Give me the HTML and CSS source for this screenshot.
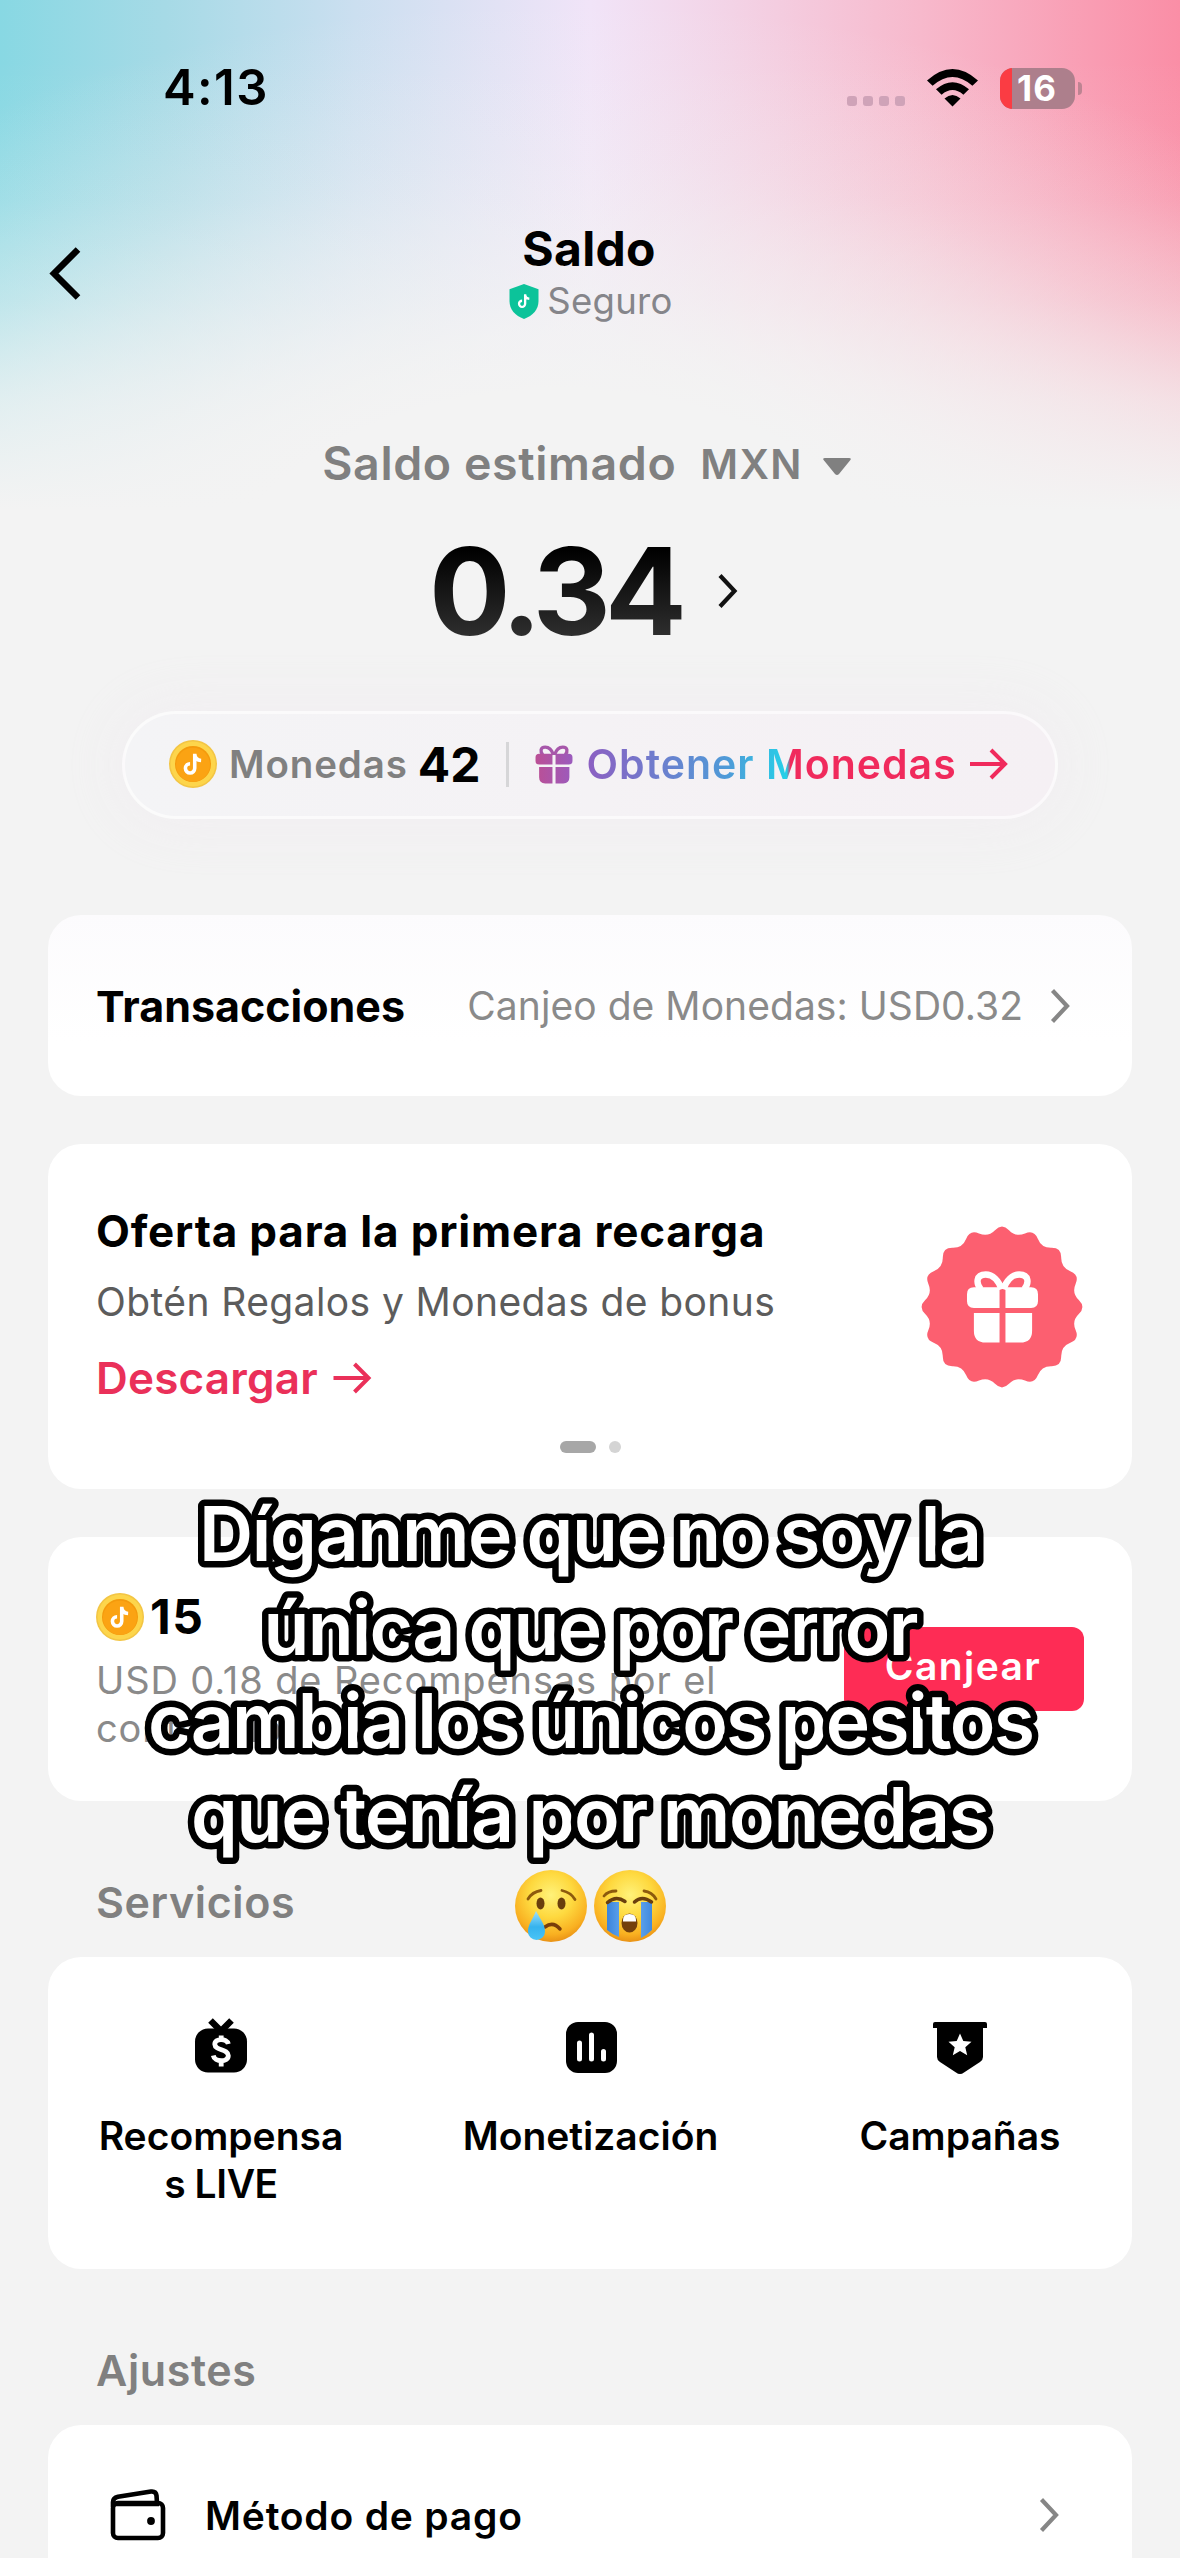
FILE: index.html
```html
<!DOCTYPE html>
<html lang="es">
<head>
<meta charset="utf-8">
<title>Saldo</title>
<link rel="stylesheet" href="styles.css">
</head>
<body>
<svg width="0" height="0" class="defs" aria-hidden="true">
  <defs>
    <linearGradient id="giftFill" x1="0" y1="0" x2="1" y2="0"><stop offset="0" stop-color="#bb4f95"/><stop offset="1" stop-color="#9b5bbd"/></linearGradient>
    <radialGradient id="faceFill" cx=".5" cy=".35" r=".68"><stop offset="0" stop-color="#fff27a"/><stop offset=".45" stop-color="#fed93f"/><stop offset=".8" stop-color="#f9b021"/><stop offset="1" stop-color="#e58a12"/></radialGradient>
    <linearGradient id="tearFill" x1="0" y1="0" x2="0" y2="1"><stop offset="0" stop-color="#9fe0fb"/><stop offset=".55" stop-color="#35b3ee"/><stop offset="1" stop-color="#49c4f6"/></linearGradient>
    <linearGradient id="streamFill" x1="0" y1="0" x2="1" y2="0"><stop offset="0" stop-color="#3a83dc"/><stop offset=".5" stop-color="#74b6f5"/><stop offset="1" stop-color="#4089de"/></linearGradient>
    <symbol id="note" viewBox="0 0 24 24">
      <path d="M13.6 2.5V16a4.3 4.3 0 1 1-4.3-4.3M13.6 3c.3 3.600 2.400 5.600 5.900 5.800" fill="none" stroke="#fff" stroke-width="3.300"/>
    </symbol>
    <symbol id="coin" viewBox="0 0 48 48">
      <circle cx="24" cy="24" r="24" fill="#f3c544"/>
      <circle cx="24" cy="24" r="22.500" fill="#fdd54b"/>
      <circle cx="24" cy="24" r="18" fill="#f49a0c"/>
      <circle cx="24" cy="24.800" r="17" fill="#fba313"/>
      <use href="#note" x="11" y="11" width="26" height="26"/>
    </symbol>
    <symbol id="gift" viewBox="0 0 74 74">
      <path d="M36 19C33 10 27 4 20 4C10 4 10 13 15 19M38 19C41 10 47 4 54 4C64 4 64 13 59 19" fill="none" stroke="currentColor" stroke-width="6.500"/>
      <path d="M8 17h26v21H8q-7 0-7-7v-7q0-7 7-7zM40 17h26q7 0 7 7v7q0 7-7 7H40zM8 43h26v30H20Q8 73 8 61zM40 43h27v18q0 12-12 12H40z" fill="currentColor"/>
    </symbol>
    <symbol id="chevron" viewBox="0 0 20 36"><path d="M2.500 2.500L17 18 2.500 33.500" fill="none" stroke="currentColor" stroke-width="4.200"/></symbol>
    <symbol id="arrow" viewBox="0 0 38 32"><path d="M0 16h35M21 2l14 14-14 14" fill="none" stroke="currentColor" stroke-width="4"/></symbol>
  </defs>
</svg>

<main class="screen">
  <div class="status">
    <span class="time">4:13</span>
    <div class="indicators">
      <span class="cell"><i></i><i></i><i></i><i></i></span>
      <svg class="wifi" width="51" height="38" viewBox="0 0 51 38">
        <path d="M0 11.500Q25.500-11.500 51 11.500l-5.600 5.300Q25.500-.8 5.600 16.800z"/>
        <path d="M9 20.300Q25.500 6 42 20.300l-5.600 5.400Q25.500 16.500 14.600 25.700z"/>
        <path d="M17.500 29.500Q25.500 22.500 33.500 29.500L25.500 37.500z"/>
      </svg>
      <span class="battery"><span class="level"></span><span class="percent">16</span></span>
      <span class="nub"></span>
    </div>
  </div>

  <header class="nav">
    <svg class="back" width="32" height="53" viewBox="0 0 32 53"><path d="M29 2.500L5 26.500l24 24" fill="none" stroke="#000" stroke-width="6.500"/></svg>
    <div class="heading">
      <h1>Saldo</h1>
      <div class="secure">
        <svg width="30" height="35" viewBox="0 0 30 35"><path d="M15 0l14.500 5.300V17c0 8.500-5.500 14.500-14.500 18C6 31.500.5 25.500.5 17V5.300z" fill="#0cc39a"/><use href="#note" x="6.500" y="8.500" width="17" height="17"/></svg>
        <span>Seguro</span>
      </div>
    </div>
  </header>

  <section class="balance">
    <div class="estimate"><span class="label">Saldo estimado</span><span class="currency">MXN</span><svg width="28" height="17" viewBox="0 0 28 17"><path d="M2 0h24q3 0 1 2.500L16 16q-2 2-4 0L1 2.500Q-1 0 2 0z" fill="#808080"/></svg></div>
    <div class="amount"><span>0.34</span><svg width="21" height="36"><use href="#chevron" width="21" height="36"/></svg></div>
    <div class="pill">
      <svg width="48" height="48"><use href="#coin"/></svg>
      <span class="coins-label">Monedas</span>
      <span class="coins-value">42</span>
      <span class="divider"></span>
      <svg class="gift" width="38" height="39" viewBox="0 0 74 76">
        <path d="M36 19C33 10 27 4 20 4C10 4 10 13 15 19M38 19C41 10 47 4 54 4C64 4 64 13 59 19" fill="none" stroke="#a757aa" stroke-width="6.500"/>
        <path d="M8 17h26v21H8q-7 0-7-7v-7q0-7 7-7zM40 17h26q7 0 7 7v7q0 7-7 7H40zM8 43h26v32H20Q8 75 8 63zM40 43h27v20q0 12-12 12H40z" fill="url(#giftFill)"/>
      </svg>
      <span class="get-coins">Obtener Monedas</span>
      <svg class="pink" width="38" height="32"><use href="#arrow"/></svg>
    </div>
  </section>

  <section class="card transactions">
    <h2>Transacciones</h2>
    <span class="detail">Canjeo de Monedas: USD0.32</span>
    <svg width="20" height="36"><use href="#chevron"/></svg>
  </section>

  <section class="card offer">
    <div class="offer-body">
      <div>
        <h2>Oferta para la primera recarga</h2>
        <p>Obtén Regalos y Monedas de bonus</p>
        <div class="download"><span>Descargar</span><svg width="39" height="32"><use href="#arrow"/></svg></div>
      </div>
      <svg class="badge" width="164" height="164" viewBox="-82 -82 164 164">
        <path fill="#fc5f70" d="M7-76.800Q13.900-69.600 23-73.600Q32.100-77.600 35.800-68.300Q39.400-59 49.400-59.200Q59.400-59.400 59.200-49.400Q59-39.400 68.300-35.800Q77.600-32.100 73.600-23Q69.600-13.900 76.800-7Q84 0 76.800 7Q69.600 13.900 73.600 23Q77.600 32.100 68.300 35.800Q59 39.400 59.200 49.400Q59.400 59.400 49.400 59.200Q39.400 59 35.800 68.300Q32.100 77.600 23 73.600Q13.900 69.600 7 76.800Q0 84-7 76.800Q-13.900 69.600-23 73.600Q-32.100 77.600-35.800 68.300Q-39.400 59-49.400 59.200Q-59.400 59.400-59.200 49.400Q-59 39.400-68.300 35.800Q-77.600 32.100-73.600 23Q-69.600 13.900-76.800 7Q-84 0-76.800-7Q-69.600-13.900-73.600-23Q-77.600-32.100-68.300-35.800Q-59-39.400-59.200-49.400Q-59.400-59.400-49.400-59.200Q-39.400-59-35.800-68.300Q-32.100-77.600-23-73.600Q-13.900-69.600-7-76.800Q0-84 7-76.800z"/>
        <use href="#gift" x="-36" y="-37" width="73" height="74" color="#fff"/>
      </svg>
    </div>
    <div class="dots"><i class="on"></i><i></i></div>
  </section>

  <section class="card rewards">
    <div>
      <div class="reward-value"><svg width="48" height="48"><use href="#coin"/></svg><strong>15</strong></div>
      <p>USD 0.18 de Recompensas por el<br>contenido</p>
    </div>
    <button>Canjear</button>
  </section>

  <h3>Servicios</h3>
  <section class="card services">
    <div class="service">
      <svg width="54" height="56" viewBox="0 0 54 56"><path d="M16.500 2.500L27 13 37.500 2.500" fill="none" stroke="#000" stroke-width="6.500"/><rect x="1" y="10.500" width="52" height="44" rx="13"/><path d="M34.300 26C33 20 20.500 20 20.800 26.300C21.200 33 34 30.500 34.300 37.500C34.500 44.500 20.500 44.500 19.300 37.500M27.200 17.500V23M27.200 41.500v7" fill="none" stroke="#fff" stroke-width="4.800"/></svg>
      <span>Recompensa<br><span class="tight">s LIVE</span></span>
    </div>
    <div class="service">
      <svg width="54" height="56" viewBox="0 0 54 56"><rect x="2" y="4" width="51" height="51" rx="12"/><path d="M15.500 25v16M27.500 17v24M39.500 33.500V41" stroke="#fff" stroke-width="5" stroke-linecap="round"/></svg>
      <span>Monetización</span>
    </div>
    <div class="service">
      <svg width="54" height="56" viewBox="0 0 54 56"><path d="M2 4h50q2 0 2 2v4h-4v29q0 3-3 5L31 54.500q-4 3-8 0L7 44q-3-2-3-5V10H0V6q0-2 2-2z"/><path d="M27 15.500l3.300 7.600 8.200.7-6.200 5.400 1.900 8.100-7.200-4.300-7.200 4.300 1.900-8.100-6.200-5.400 8.200-.7z" fill="#fff"/></svg>
      <span>Campañas</span>
    </div>
  </section>

  <h3>Ajustes</h3>
  <section class="card settings">
    <svg width="56" height="52" viewBox="0 0 56 52"><g fill="none" stroke="#000" stroke-width="4.600" stroke-linejoin="round"><rect x="3" y="14" width="50" height="35" rx="5"/><path d="M3 18V13q0-4 5-5.200L41 2.500q5-.5 5.500 4L47 14M3 15h46"/></g><circle cx="41" cy="32" r="3.900"/></svg>
    <span class="method">Método de pago</span>
    <svg width="20" height="36" class="next"><use href="#chevron"/></svg>
  </section>

  <div class="caption">
    <svg class="lines" width="1180" height="390" viewBox="0 0 1180 390">
      <text x="590.500" y="74" textLength="783">Díganme que no soy la</text>
      <text x="591" y="167.600" textLength="655">única que por error</text>
      <text x="591.500" y="261.200" textLength="887">cambia los únicos pesitos</text>
      <text x="590.500" y="354.800" textLength="799">que tenía por monedas</text>
    </svg>
    <div class="emojis">
      <svg width="72" height="72" viewBox="0 0 72 72">
        <circle cx="36" cy="36" r="36" fill="url(#faceFill)"/>
        <path d="M13 29Q17 22 26 20.500M47 20.500Q56 22.500 60 29.500" fill="none" stroke="#8d5a0d" stroke-width="2.800" stroke-linecap="round"/>
        <ellipse cx="25.500" cy="33.500" rx="4" ry="6" fill="#6a3f0d"/><ellipse cx="46.500" cy="33.500" rx="4" ry="6" fill="#6a3f0d"/>
        <path d="M30 57Q38 51 45 59" fill="none" stroke="#7a3e0a" stroke-width="3.500" stroke-linecap="round"/>
        <path d="M21 41C25 49 30 54 30 61.500A8.500 8.500 0 0 1 13 61.500C13 54 18 49 21 41z" fill="url(#tearFill)"/>
      </svg>
      <svg width="72" height="72" viewBox="0 0 72 72">
        <circle cx="36" cy="36" r="36" fill="url(#faceFill)"/>
        <path d="M10 26Q14 21 22 21M50 21Q58 22 62 29" fill="none" stroke="#8d5a0d" stroke-width="2.800" stroke-linecap="round"/>
        <path d="M13 32h12v35q-6-2-12-7zM47 32h11v28q-5 5-11 8z" fill="url(#streamFill)"/>
        <path d="M13.500 32.500Q22 25 31 31.500M40.500 32Q48 25 57.500 32" fill="none" stroke="#6a3f0d" stroke-width="3.500" stroke-linecap="round"/>
        <ellipse cx="35.500" cy="53" rx="8" ry="9.500" fill="#74400c"/><path d="M29 50q0-6 6.500-6t6.500 6v1.500H29z" fill="#fff"/>
      </svg>
    </div>
  </div>
</main>
</body>
</html>
```
FILE: styles.css
```css
* { box-sizing: border-box; }
body { margin: 0; background: #f3f3f3; }
.defs { position: absolute; }
svg { display: block; flex: none; }
h1, h2, h3, p { margin: 0; }

.screen {
  position: relative;
  width: 1180px;
  height: 2558px;
  overflow: hidden;
  font-family: "Inter", sans-serif;
  color: #000;
  background:
    linear-gradient(180deg, rgba(243,243,243,0) 60px, rgba(243,243,243,.12) 200px, rgba(243,243,243,.36) 300px, rgba(243,243,243,.72) 400px, #f3f3f3 510px),
    radial-gradient(ellipse 980px 590px at 560px 590px, #f3f3f3 34%, rgba(243,243,243,.6) 52%, rgba(243,243,243,.26) 74%, rgba(243,243,243,0) 100%),
    linear-gradient(90deg, #88d8e3 0%, #a6dae6 14%, #cbdff0 30%, #f1e4f8 50%, #f3d3e6 62%, #f7b9cc 78%, #fa8ea6 100%);
}

.status { height: 176px; display: flex; align-items: center; justify-content: space-between; padding: 0 98px 0 163px; }
.time { font-size: 49px; font-weight: 600; letter-spacing: 1.4px; line-height: 60px; }
.indicators { display: flex; align-items: center; }
.cell { display: flex; gap: 6px; margin: 25px 22px 0 0; }
.cell i { width: 10px; height: 10px; border-radius: 3px; background: #cfa3b8; }
.battery { position: relative; display: flex; width: 75px; height: 41px; margin-left: 22px; border-radius: 13px; overflow: hidden; background: #ad7f8c; }
.level { width: 12px; background: #fb3c43; }
.percent { width: 50px; text-align: center; color: #fff; font-size: 35px; font-weight: 700; line-height: 41px; letter-spacing: 1px; }
.nub { width: 4px; height: 13px; margin-left: 3px; border-radius: 0 5px 5px 0; background: #bd8492; }

.nav { height: 194px; display: grid; grid-template-columns: 1fr auto 1fr; align-items: center; padding: 0 51px 0 49px; }
.heading { align-self: start; padding-top: 47px; display: flex; flex-direction: column; align-items: center; }
h1 { font-size: 48px; font-weight: 700; line-height: 52px; letter-spacing: .3px; }
.secure { display: flex; align-items: center; gap: 8px; margin-left: 4px; font-size: 36.500px; line-height: 53px; letter-spacing: .3px; color: #85858a; }

.balance { display: flex; flex-direction: column; align-items: center; padding-top: 63px; height: 545px; }
.estimate { display: flex; align-items: center; height: 60px; margin-right: 7px; color: #808080; font-weight: 600; }
.label { font-size: 46.500px; letter-spacing: .6px; }
.currency { font-size: 41px; letter-spacing: 1.3px; margin: 2px 20px 0 24px; }
.estimate svg { margin-top: 6px; }
.amount { display: flex; align-items: center; height: 120px; margin: 38px 13px 60px 0; }
.amount span { font-size: 121px; font-weight: 700; line-height: 140px; letter-spacing: -5.900px; background: linear-gradient(180deg, #000 20%, #303030 85%); -webkit-background-clip: text; background-clip: text; color: transparent; padding-right: 5px; }
.amount svg { margin-left: 31px; color: #111; }
.pill { display: flex; align-items: center; width: 936px; height: 108px; padding: 0 0 2px 44px; border: 3px solid rgba(255,255,255,.6); border-radius: 54px; background: linear-gradient(90deg, #f4f4f6, #f5f0f4); box-shadow: 0 0 60px rgba(240,233,240,.6); }
.coins-label { margin-left: 12px; font-size: 38.500px; font-weight: 600; letter-spacing: .9px; color: #808080; }
.coins-value { margin-left: 10px; font-size: 48px; font-weight: 700; letter-spacing: 0; }
.divider { width: 3px; height: 45px; margin: 0 26px 0 25px; background: #d6d6d8; }
.get-coins { margin-left: 14px; font-size: 41px; font-weight: 600; letter-spacing: 1px; background: linear-gradient(90deg, #8c5fc2 0%, #4f9bd8 38%, #25d0e8 54%, #f02a5c 55%); -webkit-background-clip: text; background-clip: text; color: transparent; }
.pink { margin-left: 13px; color: #f02a5c; }

.card { margin: 0 48px; background: #fff; border-radius: 33px; }
h2 { font-size: 43px; font-weight: 700; line-height: 60px; }
.transactions { display: flex; align-items: center; height: 181px; padding: 0 62px 0 48px; background: linear-gradient(180deg, #fcfbfd, #fff 70%); }
.detail { flex: 1; text-align: right; font-size: 39px; letter-spacing: .05px; color: #8a8a8a; margin-right: 27px; }
.transactions svg, .next { color: #868686; }

.offer { height: 345px; margin-top: 48px; padding: 57px 48px 0 48px; }
.offer-body { display: flex; justify-content: space-between; }
.offer h2 { font-size: 44px; letter-spacing: .8px; }
.offer p { margin: 16px 0 21px; font-size: 39px; line-height: 50px; letter-spacing: .4px; color: #5c5c5c; }
.download { display: flex; align-items: center; gap: 15px; font-size: 44px; font-weight: 600; line-height: 60px; letter-spacing: .2px; color: #ea3059; }
.badge { margin-top: 24px; }
.dots { display: flex; justify-content: center; gap: 13px; margin-top: 33px; }
.dots i { width: 12px; height: 12px; border-radius: 6px; background: #d4d4d4; }
.dots .on { width: 36px; background: #a7a7a7; }

.rewards { display: flex; align-items: center; justify-content: space-between; height: 264px; margin-top: 48px; padding: 0 48px 0 48px; }
.reward-value { display: flex; align-items: center; gap: 6px; height: 60px; font-size: 48px; letter-spacing: 1.5px; margin-bottom: 9px; }
.reward-value strong { font-weight: 700; }
.rewards p { font-size: 38px; line-height: 48px; letter-spacing: .9px; color: #8a8a8a; }
button { width: 240px; height: 84px; padding: 0 2px 7px 0; border: 0; border-radius: 12px; background: #fe2c55; color: #fff; font: 600 39px "Inter", sans-serif; letter-spacing: 1.4px; }

h3 { padding: 71px 0 25px 96px; font-size: 43px; font-weight: 600; line-height: 60px; letter-spacing: .6px; color: #808080; }
.services { display: flex; justify-content: space-between; height: 312px; padding: 61px 49px 0 50px; }
.service { width: 246px; display: flex; flex-direction: column; align-items: center; gap: 38px; text-align: center; font-size: 39px; font-weight: 600; line-height: 48px; letter-spacing: 0; white-space: nowrap; }
.tight { letter-spacing: -.4px; }
.settings { display: flex; align-items: center; height: 180px; padding: 0 73px 0 62px; }
.method { flex: 1; margin-left: 39px; font-size: 39px; font-weight: 600; letter-spacing: .8px; }

.caption { position: absolute; top: 1487px; left: 0; width: 1180px; display: flex; flex-direction: column; align-items: center; }
.lines text { fill: #fff; stroke: #000; stroke-width: 13px; stroke-linejoin: round; paint-order: stroke fill; font-size: 75px; font-weight: 600; word-spacing: -2px; text-anchor: middle; }
.emojis { display: flex; gap: 7px; margin-top: -7px; }
```
